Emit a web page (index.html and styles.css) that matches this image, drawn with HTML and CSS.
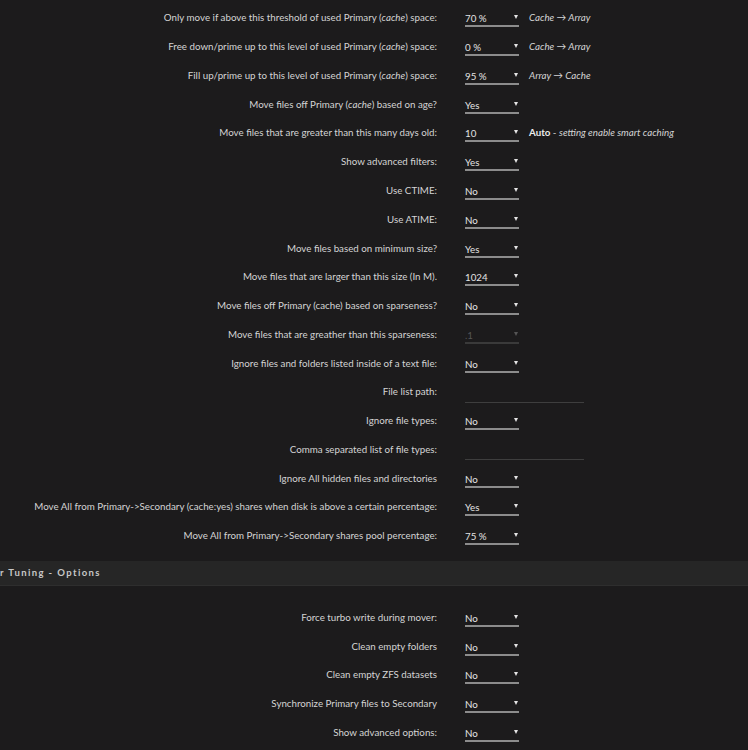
FILE: index.html
```html
<!DOCTYPE html>
<html>
<head>
  <title>Mover Tuning</title>
  <link rel="stylesheet" href="styles.css">
</head>
<body>
  <div class="settings">
    <div class="row">
      <label>Only move if above this threshold of used Primary (<i>cache</i>) space:</label>
      <div class="field">
        <div class="select">70 %</div>
        <span class="note"><i>Cache &rarr; Array</i></span>
      </div>
    </div>
    <div class="row">
      <label>Free down/prime up to this level of used Primary (<i>cache</i>) space:</label>
      <div class="field">
        <div class="select">0 %</div>
        <span class="note"><i>Cache &rarr; Array</i></span>
      </div>
    </div>
    <div class="row">
      <label>Fill up/prime up to this level of used Primary (<i>cache</i>) space:</label>
      <div class="field">
        <div class="select">95 %</div>
        <span class="note"><i>Array &rarr; Cache</i></span>
      </div>
    </div>
    <div class="row">
      <label>Move files off Primary (<i>cache</i>) based on age?</label>
      <div class="field"><div class="select">Yes</div></div>
    </div>
    <div class="row">
      <label>Move files that are greater than this many days old:</label>
      <div class="field">
        <div class="select">10</div>
        <span class="note"><b>Auto</b> - <i>setting enable smart caching</i></span>
      </div>
    </div>
    <div class="row">
      <label>Show advanced filters:</label>
      <div class="field"><div class="select">Yes</div></div>
    </div>
    <div class="row">
      <label>Use CTIME:</label>
      <div class="field"><div class="select">No</div></div>
    </div>
    <div class="row">
      <label>Use ATIME:</label>
      <div class="field"><div class="select">No</div></div>
    </div>
    <div class="row">
      <label>Move files based on minimum size?</label>
      <div class="field"><div class="select">Yes</div></div>
    </div>
    <div class="row">
      <label>Move files that are larger than this size (In M).</label>
      <div class="field"><div class="select">1024</div></div>
    </div>
    <div class="row">
      <label>Move files off Primary (cache) based on sparseness?</label>
      <div class="field"><div class="select">No</div></div>
    </div>
    <div class="row">
      <label>Move files that are greather than this sparseness:</label>
      <div class="field"><div class="select disabled">.1</div></div>
    </div>
    <div class="row">
      <label>Ignore files and folders listed inside of a text file:</label>
      <div class="field"><div class="select">No</div></div>
    </div>
    <div class="row">
      <label>File list path:</label>
      <div class="field"><div class="text-input"></div></div>
    </div>
    <div class="row">
      <label>Ignore file types:</label>
      <div class="field"><div class="select">No</div></div>
    </div>
    <div class="row">
      <label>Comma separated list of file types:</label>
      <div class="field"><div class="text-input"></div></div>
    </div>
    <div class="row">
      <label>Ignore All hidden files and directories</label>
      <div class="field"><div class="select">No</div></div>
    </div>
    <div class="row">
      <label>Move All from Primary-&gt;Secondary (cache:yes) shares when disk is above a certain percentage:</label>
      <div class="field"><div class="select">Yes</div></div>
    </div>
    <div class="row">
      <label>Move All from Primary-&gt;Secondary shares pool percentage:</label>
      <div class="field"><div class="select">75 %</div></div>
    </div>
  </div>

  <div class="section-title">r Tuning - Options</div>

  <div class="settings lower">
    <div class="row">
      <label>Force turbo write during mover:</label>
      <div class="field"><div class="select">No</div></div>
    </div>
    <div class="row">
      <label>Clean empty folders</label>
      <div class="field"><div class="select">No</div></div>
    </div>
    <div class="row">
      <label>Clean empty ZFS datasets</label>
      <div class="field"><div class="select">No</div></div>
    </div>
    <div class="row">
      <label>Synchronize Primary files to Secondary</label>
      <div class="field"><div class="select">No</div></div>
    </div>
    <div class="row">
      <label>Show advanced options:</label>
      <div class="field"><div class="select">No</div></div>
    </div>
  </div>
</body>
</html>
```

FILE: styles.css
```css
body {
  margin: 0;
  background-color: #1c1b1c;
  color: #d4d4d4;
  font-family: Lato, "Open Sans", sans-serif;
  font-size: 9.75px;
  overflow: hidden;
}

.settings {
  padding-top: 3px;
}

.settings.lower {
  padding-top: 17px;
}

.row {
  display: grid;
  grid-template-columns: 437px 1fr;
  column-gap: 28px;
  align-items: center;
  height: 28.78px;
}

.row label {
  text-align: right;
  white-space: nowrap;
}

.field {
  display: flex;
  align-items: center;
  gap: 10px;
}

.select {
  position: relative;
  width: 54px;
  height: 20px;
  line-height: 20px;
  padding-top: 1px;
  box-sizing: border-box;
  border-bottom: 2px solid #8c8c8c;
  color: #e4e4e4;
}

.select::after {
  content: "";
  position: absolute;
  right: 1px;
  top: 8px;
  border-left: 2.5px solid transparent;
  border-right: 2.5px solid transparent;
  border-top: 4px solid #e4e4e4;
}

.select.disabled {
  color: #555;
  border-bottom-color: #3a3a3a;
}

.select.disabled::after {
  border-top-color: #555;
}

.text-input {
  width: 119px;
  height: 20px;
  margin-top: 2px;
  border-bottom: 1px solid #3e3e3e;
}

.note {
  color: #d4d4d4;
}

.note b {
  color: #ececec;
}

.section-title {
  margin-top: 11px;
  height: 24px;
  line-height: 24px;
  background-color: #262626;
  border-bottom: 1px solid #2e2e2e;
  color: #c8c8c8;
  font-weight: bold;
  font-size: 9.5px;
  letter-spacing: 1.4px;
  white-space: nowrap;
}
```
